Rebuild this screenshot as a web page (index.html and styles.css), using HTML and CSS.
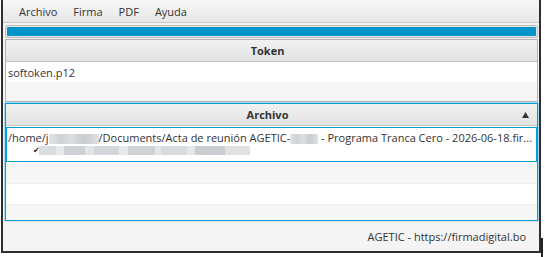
FILE: index.html
```html
<!DOCTYPE html>
<html lang="es">

<head>
  <meta charset="utf-8" />
  <title>Firmatic</title>
  <link rel="stylesheet" href="styles.css">
</head>

<body>
  <div class="window">
    <nav class="menubar">
      <span class="menu">Archivo</span>
      <span class="menu">Firma</span>
      <span class="menu">PDF</span>
      <span class="menu">Ayuda</span>
    </nav>

    <div class="content">
      <div class="progress">
        <div class="progress-bar"></div>
      </div>

      <section class="table token-table">
        <div class="col-header">Token</div>
        <div class="row">softoken.p12</div>
        <div class="row odd fill"></div>
      </section>

      <section class="table file-table">
        <div class="col-header">
          Archivo
          <svg class="sort" width="7" height="6" viewBox="0 0 7 6"><polygon points="3.5,0 7,6 0,6" /></svg>
        </div>
        <div class="row file-row">
          <div class="path">/home/j<span class="blur b1"></span>/Documents/Acta de reunión AGETIC-<span class="blur b2"></span> - Programa Tranca Cero - 2026-06-18.fir...</div>
          <div class="signer"><span class="check">✔</span><span class="blur b3"></span></div>
        </div>
        <div class="row odd"></div>
        <div class="row"></div>
        <div class="row odd fill"></div>
      </section>
    </div>

    <footer class="statusbar">AGETIC - https://firmadigital.bo</footer>
  </div>
  <div class="edge"></div>
</body>

</html>
```

FILE: styles.css
```css
body {
  background-color: #fff;
  margin: 0;
  font-family: 'Open Sans', sans-serif;
  font-size: 11px;
  color: #333;
}

.window {
  box-sizing: border-box;
  width: 540px;
  height: 253px;
  margin-left: 1px;
  background: #f4f4f4;
  border: 2px solid #2e2e2e;
  border-top: 0;
  display: flex;
  flex-direction: column;
}

.menubar {
  box-sizing: border-box;
  height: 23px;
  display: flex;
  align-items: center;
  padding-left: 8px;
  background: linear-gradient(#f8f8f8, #e7e7e7);
  border-bottom: 1px solid #c9c9c9;
}

.menu {
  padding: 0 8px;
}

.content {
  padding: 0 1px 0 2px;
}

.progress {
  box-sizing: border-box;
  height: 13px;
  margin-top: 2px;
  padding: 1px;
  border: 1px solid #bdbdbd;
  border-radius: 2px;
  background: #e6e6e6;
}

.progress-bar {
  height: 9px;
  border-radius: 1px;
  background: #0093c7;
}

.table {
  box-sizing: border-box;
  margin-top: 1px;
  background: #fff;
  border: 1px solid #b4b4b4;
  display: flex;
  flex-direction: column;
  overflow: hidden;
}

.token-table {
  height: 63px;
}

.file-table {
  height: 118px;
  border-color: #039ed3;
  box-shadow: 0 0 0 1px #a9dcef;
}

.col-header {
  position: relative;
  box-sizing: border-box;
  height: 22px;
  flex: none;
  display: flex;
  align-items: center;
  justify-content: center;
  padding-right: 8px;
  font-weight: bold;
  background: linear-gradient(#f2f2f2, #e2e2e2);
  border-bottom: 1px solid #c4c4c4;
}

.sort {
  position: absolute;
  right: 8px;
  top: 8px;
  fill: #333;
}

.row {
  box-sizing: border-box;
  height: 21px;
  flex: none;
  display: flex;
  align-items: center;
  padding-left: 2px;
  background: #fff;
  border-bottom: 1px solid #f0f0f0;
}

.row.odd {
  background: #f6f6f6;
}

.row.fill {
  flex: 1;
  border-bottom: 0;
}

.row.odd:not(.fill) {
  height: 22px;
}

.file-row {
  height: 35px;
  margin: 1px 0 0;
  padding: 3px 1px 0;
  display: block;
  border: 1px solid #039ed3;
  white-space: nowrap;
  overflow: hidden;
}

.path,
.signer {
  height: 13px;
  line-height: 13px;
}

.signer {
  display: flex;
  align-items: center;
  padding-left: 25px;
}

.check {
  font-family: 'DejaVu Sans', sans-serif;
  font-size: 8px;
  color: #111;
  width: 6px;
}

.blur {
  display: inline-block;
  vertical-align: middle;
  height: 10px;
  background: linear-gradient(90deg, #e2e4e6 0%, #cfd2d5 25%, #dcdee1 45%, #c8cbcf 70%, #e0e2e4 100%);
}

.b1 {
  width: 50px;
}

.b2 {
  width: 28px;
}

.b3 {
  width: 211px;
  height: 9px;
  background: linear-gradient(90deg,
    #dadde0 0 8%, #e6e8ea 8% 12%, #cdd1d5 12% 22%, #e2e4e6 22% 26%,
    #d3d6da 26% 38%, #e7e8ea 38% 42%, #cfd3d6 42% 55%, #e4e6e8 55% 58%,
    #d8dbde 58% 70%, #e6e7e9 70% 74%, #cacdd1 74% 88%, #dfe1e3 88% 100%);
}

.statusbar {
  flex: 1;
  display: flex;
  align-items: center;
  justify-content: flex-end;
  padding-right: 13px;
  border-top: 1px solid #e4e4e4;
}

.edge {
  position: absolute;
  left: 541px;
  top: 238px;
  width: 2px;
  height: 19px;
  background: #222;
}
```
